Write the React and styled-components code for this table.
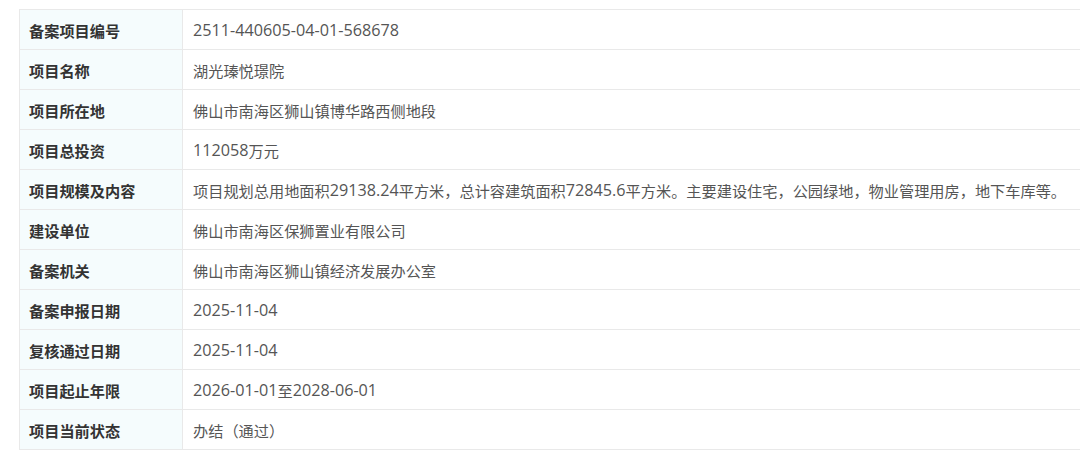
import React from 'react';
import styled, { createGlobalStyle } from 'styled-components';

const GlobalStyle = createGlobalStyle`
  html, body {
    margin: 0;
    padding: 0;
    background: #ffffff;
    overflow: hidden;
  }
`;

const rows = [
  ['备案项目编号', '2511-440605-04-01-568678'],
  ['项目名称', '湖光瑧悦璟院'],
  ['项目所在地', '佛山市南海区狮山镇博华路西侧地段'],
  ['项目总投资', '112058万元'],
  ['项目规模及内容', '项目规划总用地面积29138.24平方米，总计容建筑面积72845.6平方米。主要建设住宅，公园绿地，物业管理用房，地下车库等。'],
  ['建设单位', '佛山市南海区保狮置业有限公司'],
  ['备案机关', '佛山市南海区狮山镇经济发展办公室'],
  ['备案申报日期', '2025-11-04'],
  ['复核通过日期', '2025-11-04'],
  ['项目起止年限', '2026-01-01至2028-06-01'],
  ['项目当前状态', '办结（通过）'],
];

const Page = styled.div`
  padding: 9px 0 0 19px;
  width: 1120px;
`;

const Table = styled.div`
  display: grid;
  grid-template-columns: 163px 1fr;
  border-top: 1px solid #e9e9e9;
  border-left: 1px solid #e9e9e9;
  font-family: "Open Sans", "Noto Sans CJK SC", sans-serif;
  font-size: 15.2px;
`;

const Cell = styled.div`
  height: 39px;
  display: flex;
  align-items: center;
  border-bottom: 1px solid #e9e9e9;
  padding-left: ${(p) => (p.$label ? '9px' : '10px')};
  background: ${(p) => (p.$label ? '#f5fcfd' : '#ffffff')};
  border-right: ${(p) => (p.$label ? '1px solid #e9e9e9' : 'none')};
  color: ${(p) => (p.$label ? '#333333' : '#555555')};
  font-weight: ${(p) => (p.$label ? 700 : 400)};
  white-space: nowrap;
`;

const Latin = styled.span`
  font-size: 16.2px;
`;

const renderValue = (text) =>
  text.split(/([0-9A-Za-z.\-]+)/).map((part, i) =>
    i % 2 ? <Latin key={i}>{part}</Latin> : part
  );

export default function App() {
  return (
    <Page>
      <GlobalStyle />
      <Table>
        {rows.map(([label, value]) => (
          <React.Fragment key={label}>
            <Cell $label>{label}</Cell>
            <Cell>{renderValue(value)}</Cell>
          </React.Fragment>
        ))}
      </Table>
    </Page>
  );
}
